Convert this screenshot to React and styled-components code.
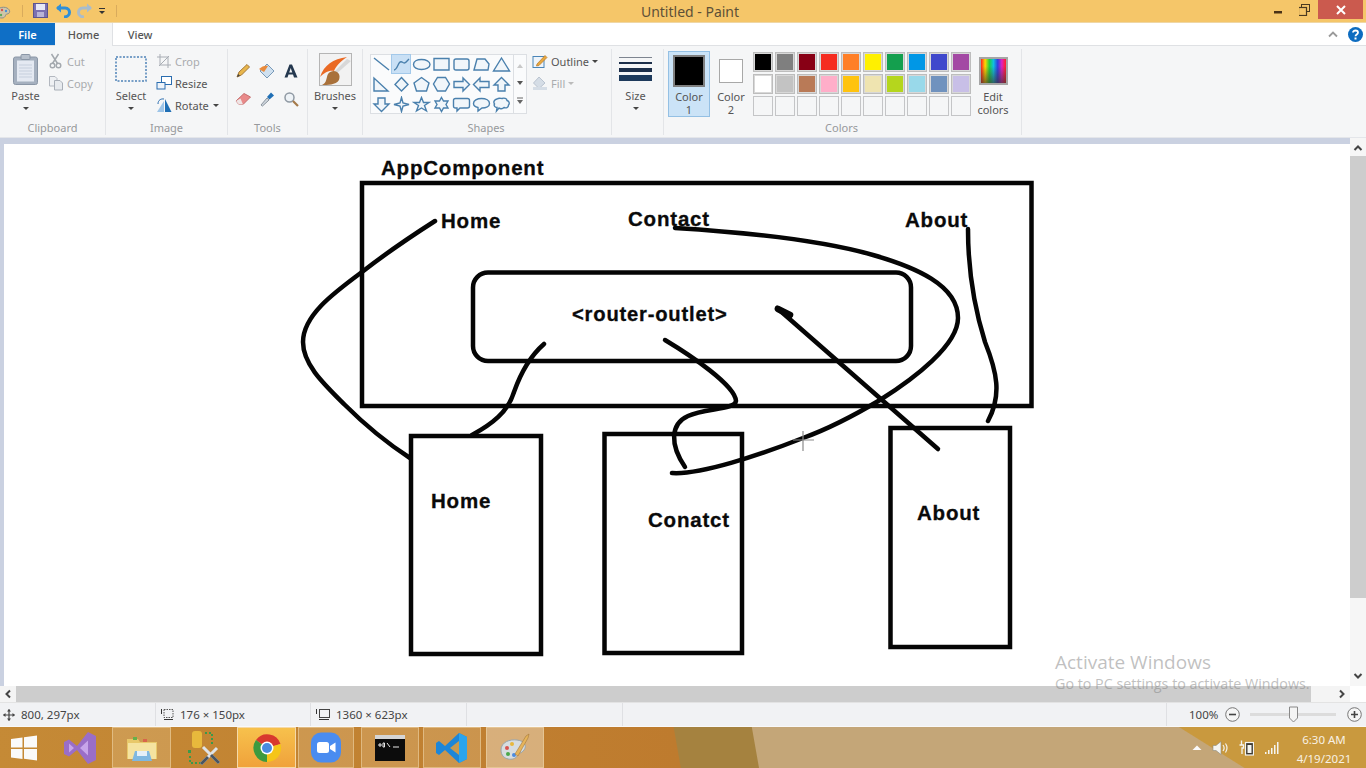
import React from 'react'
import styled, { createGlobalStyle } from 'styled-components'

const Global = createGlobalStyle`
  html, body { margin: 0; padding: 0; background: #fff; }
  body { font-family: "Noto Sans", "Open Sans", "Liberation Sans", sans-serif; }
`

const Window = styled.div`
  width: 1366px;
  height: 768px;
  overflow: hidden;
  display: flex;
  flex-direction: column;
  position: relative;
`

/* title bar */
const TitleBar = styled.div`
  height: 23px;
  flex: none;
  box-sizing: border-box;
  background: #f5c669;
  border-bottom: 1px solid #efd7a6;
  display: flex;
  align-items: center;
  position: relative;
`
const QuickAccess = styled.div`
  display: flex;
  align-items: center;
  height: 22px;
  width: 120px;
  margin-top: -1px;
`
const QuickSep = styled.span`
  width: 1px;
  height: 12px;
  background: #d9ab5c;
  margin: ${p => p.$m};
`
const Gap = styled.span`
  width: ${p => p.$w}px;
  flex: none;
`
const Title = styled.div`
  flex: 1;
  text-align: center;
  font-size: 14px;
  color: #5d5037;
  margin-right: 6px;
  margin-top: 1px;
`
const WinControls = styled.div`
  display: flex;
  align-items: flex-start;
  height: 22px;
  padding-right: 3px;
`
const WinBtn = styled.div`
  width: ${p => p.$w}px;
  height: 19px;
  display: flex;
  align-items: center;
  justify-content: center;
  background: ${p => p.$bg || 'none'};
`

/* tabs */
const TabRow = styled.div`
  height: 23px;
  flex: none;
  box-sizing: border-box;
  background: #fff;
  border-bottom: 1px solid #dfe1e4;
  display: flex;
  align-items: stretch;
`
const Tab = styled.div`
  width: ${p => p.$w}px;
  display: flex;
  align-items: center;
  justify-content: center;
  font-size: 11px;
  color: ${p => (p.$file ? '#fff' : '#555')};
  font-weight: ${p => (p.$file ? 600 : 500)};
  background: ${p => (p.$file ? '#0f6fc6' : p.$on ? '#f5f6f7' : '#fff')};
  border-right: ${p => (p.$on ? '1px solid #dfe1e4' : 'none')};
  box-sizing: border-box;
  margin-bottom: ${p => (p.$on ? '-1px' : 0)};
`
const TabEnd = styled.div`
  margin-left: auto;
  display: flex;
  align-items: center;
  gap: 10px;
  padding-right: 3px;
`

/* ribbon */
const Ribbon = styled.div`
  height: 92px;
  flex: none;
  box-sizing: border-box;
  background: #f5f6f7;
  border-bottom: 1px solid #e4e6ea;
  padding-top: 3px;
  display: flex;
`
const Group = styled.div`
  width: ${p => p.$w}px;
  flex: none;
  box-sizing: border-box;
  height: 86px;
  border-right: 1px solid #e3e5e8;
  display: flex;
  flex-direction: column;
`
const GroupBody = styled.div`
  height: 73px;
  display: flex;
  padding-left: ${p => p.$pl || 0}px;
  gap: ${p => p.$gap || 0}px;
`
const GroupName = styled.div`
  font-size: 11px;
  line-height: 14px;
  text-align: center;
  color: #97999c;
  padding-right: ${p => p.$pr || 0}px;
`
const BigTool = styled.div`
  width: ${p => p.$w}px;
  flex: none;
  display: flex;
  flex-direction: column;
  align-items: center;
  font-size: 11px;
  line-height: 13px;
  color: #555;
`
const BigIcon = styled.div`
  height: 40px;
  display: flex;
  align-items: center;
  justify-content: center;
`
const Caret = styled.div`
  width: 0;
  height: 0;
  margin-top: ${p => p.$mt ?? 5}px;
  margin-left: ${p => p.$ml || 0}px;
  border-left: 3px solid transparent;
  border-right: 3px solid transparent;
  border-top: 3px solid ${p => (p.$off ? '#bbb' : '#444')};
`
const SmallCol = styled.div`
  display: flex;
  flex-direction: column;
  gap: 6px;
  padding-top: 4px;
`
const SmallTool = styled.div`
  height: 16px;
  display: flex;
  align-items: center;
  gap: 3px;
  font-size: 11px;
  color: ${p => (p.$off ? '#a9abae' : '#555')};
`
const ToolGrid = styled.div`
  display: grid;
  grid-template-columns: repeat(3, 24px);
  grid-auto-rows: 28px;
  padding: 8px 0 0 3px;
  justify-items: center;
  align-items: center;
`
const Gallery = styled.div`
  width: 157px;
  height: 60px;
  box-sizing: border-box;
  margin-top: 5px;
  background: #fafbfc;
  border: 1px solid #dcdfe3;
  display: flex;
`
const GalleryGrid = styled.div`
  width: 142px;
  margin-top: -1px;
  display: grid;
  grid-template-columns: repeat(7, 20px);
  grid-auto-rows: 20px;
`
const ShapeCell = styled.div`
  display: flex;
  align-items: center;
  justify-content: center;
  box-sizing: border-box;
  ${p => p.$on && 'background: #c9e0f5; border: 1px solid #a3c9ea;'}
`
const GalleryArrows = styled.div`
  flex: 1;
  border-left: 1px solid #dcdfe3;
  display: flex;
  flex-direction: column;
  align-items: center;
  justify-content: space-around;
  padding: 2px 0;
`
const ColorTool = styled.div`
  width: ${p => p.$w}px;
  height: ${p => (p.$on ? '66px' : 'auto')};
  margin-left: ${p => p.$ml || 0}px;
  flex: none;
  box-sizing: border-box;
  margin-top: 2px;
  display: flex;
  flex-direction: column;
  align-items: center;
  font-size: 11px;
  line-height: 13px;
  color: #555;
  text-align: center;
  background: ${p => (p.$on ? '#cbe3f7' : 'none')};
  border: 1px solid ${p => (p.$on ? '#94c0e4' : 'transparent')};
`
const ColorSlot = styled.div`
  height: 37px;
  display: flex;
  align-items: center;
  justify-content: center;
  margin-bottom: 1px;
`
const CurrentColor = styled.div`
  width: ${p => p.$s}px;
  height: ${p => p.$s}px;
  box-sizing: border-box;
  background: ${p => p.$c};
  border: ${p => (p.$thick ? '2px solid #7f7f7f' : '1px solid #a8a8a8')};
`
const Palette = styled.div`
  display: grid;
  grid-template-columns: repeat(10, 20px);
  grid-auto-rows: 20px;
  gap: 2px;
  padding-top: 3px;
  margin-left: 1px;
`
const Swatch = styled.div`
  box-sizing: border-box;
  background: ${p => p.$c};
  border: 1px solid ${p => (p.$c === 'none' ? '#c4c5c7' : '#bdbdbd')};
  box-shadow: ${p => (p.$c === 'none' ? 'none' : 'inset 0 0 0 1px #d8d8d8')};
`
const Spectrum = styled.div`
  width: 29px;
  height: 28px;
  box-sizing: border-box;
  border: 2px solid #a5a5a5;
  background:
    linear-gradient(to bottom, rgba(40,40,40,0) 30%, rgba(60,50,40,.65) 100%),
    linear-gradient(to right, #ff2020, #ffd800, #20d040, #10c0e0, #3040e0, #e020c0, #ff2020);
`

/* workspace */
const Workspace = styled.div`
  flex: 1;
  min-height: 0;
  display: grid;
  grid-template-columns: 1350px 16px;
  grid-template-rows: 548px 16px;
  position: relative;
`
const CanvasPane = styled.div`
  background: #cad1e1;
  padding: 6px 0 0 4px;
  overflow: hidden;
`
const Canvas = styled.div`
  width: 100%;
  height: 100%;
  background: #fff;
  position: relative;
`
const Drawing = styled.svg`
  position: absolute;
  left: -4px;
  top: 0;
`
const Label = styled.div`
  position: absolute;
  left: ${p => p.$x - 4}px;
  top: ${p => p.$y - 156}px;
  line-height: 24px;
  font-family: "Liberation Sans", Arial, sans-serif;
  font-weight: 700;
  font-size: ${p => p.$size || 20.5}px;
  letter-spacing: 0.8px;
  -webkit-text-stroke: 0.3px #0a0a0a;
  color: #0a0a0a;
  white-space: nowrap;
`
const VScroll = styled.div`
  background: #f6f6f6;
  display: flex;
  flex-direction: column;
  align-items: stretch;
`
const VArrow = styled.div`
  height: ${p => p.$h}px;
  padding-top: ${p => p.$pt || 0}px;
  box-sizing: border-box;
  display: flex;
  align-items: center;
  justify-content: center;
`
const VThumb = styled.div`
  height: 442px;
  background: #cdcdcd;
`
const Filler = styled.div`
  flex: 1;
`
const HScroll = styled.div`
  background: #f4f4f4;
  display: flex;
  align-items: stretch;
`
const HArrow = styled.div`
  width: ${p => p.$w}px;
  display: flex;
  align-items: center;
  justify-content: center;
`
const HThumb = styled.div`
  width: 1295px;
  background: #cdcdcd;
`
const Corner = styled.div`
  background: #fff;
`
const Watermark = styled.div`
  position: absolute;
  left: 1055px;
  top: 512px;
  color: rgba(130, 130, 130, 0.5);
  font-family: "Open Sans", "Noto Sans", sans-serif;
  pointer-events: none;
`
const WatermarkBig = styled.div`
  font-size: 19px;
  line-height: 24px;
`
const WatermarkSmall = styled.div`
  font-size: 14.3px;
  line-height: 20px;
  white-space: nowrap;
`

/* status bar */
const StatusBar = styled.div`
  height: 25px;
  flex: none;
  box-sizing: border-box;
  background: #f1f2f4;
  border-top: 1px solid #e3e3e3;
  border-bottom: 1px solid #f9f9f9;
  display: flex;
  align-items: stretch;
`
const StatusCell = styled.div`
  width: ${p => p.$w}px;
  flex: none;
  box-sizing: border-box;
  padding-left: ${p => p.$pl || 0}px;
  border-right: 1px solid #dfe0e3;
  display: flex;
  align-items: center;
  gap: 6px;
  font-size: 11.5px;
  color: #444;
  white-space: nowrap;
`
const ZoomArea = styled.div`
  flex: 1;
  display: flex;
  align-items: center;
  font-size: 11.5px;
  color: #444;
  padding-left: 22px;
`
const ZoomLabel = styled.span`
  width: 35.5px;
  flex: none;
`
const ZoomTrack = styled.div`
  width: 86px;
  height: 3px;
  margin: 0 11px 0 10px;
  background: #dcdcdc;
  position: relative;
`
const ZoomThumb = styled.svg`
  position: absolute;
  left: 39px;
  top: -7px;
`

/* taskbar */
const Taskbar = styled.div`
  height: 41px;
  flex: none;
  display: flex;
  align-items: stretch;
  background:
    linear-gradient(32deg, transparent 659px, #c9993e 660px),
    linear-gradient(80deg, #c58a36 0, #be7b2e 670px, #a5823f 671px, #a5823f 747px, #c4a678 748px);
`
const TaskItem = styled.div`
  width: ${p => p.$w}px;
  margin-left: ${p => p.$ml || 0}px;
  flex: none;
  box-sizing: border-box;
  display: flex;
  align-items: center;
  justify-content: center;
  border: 1px solid ${p => (p.$active ? '#f5d9a8' : p.$open ? 'rgba(240,215,170,.55)' : 'transparent')};
  background: ${p =>
    p.$active
      ? 'linear-gradient(#f7c14c, #f0a23b)'
      : p.$focus
        ? 'rgba(235,215,185,.55)'
        : p.$open
          ? 'rgba(235,205,155,.28)'
          : 'none'};
`
const Tray = styled.div`
  margin-left: auto;
  display: flex;
  align-items: center;
  gap: 10px;
  color: #f6efe2;
  padding-right: 14px;
`
const Clock = styled.div`
  width: 56px;
  margin-left: 6px;
  margin-top: 2px;
  text-align: center;
  font-size: 11.5px;
  line-height: 19px;
  color: #f8f1e4;
`

/* icons */
const Ico = ({ w = 16, h = 16, children }) => (
  <svg width={w} height={h} viewBox={`0 0 ${w} ${h}`} fill="none" style={{ display: 'block', flex: 'none' }}>
    {children}
  </svg>
)

const shapePaths = [
  'M2 2L17 14',
  'M2 14C6 14 6 4 10 6C13 8 13 7 17 3',
  'M9.5 3.5C14 3.5 18 5.5 18 8.5C18 11.5 14 13.5 9.5 13.5C5 13.5 1.5 11.5 1.5 8.5C1.5 5.5 5 3.5 9.5 3.5Z',
  'M2 2.5H17V14H2Z',
  'M4 3H15Q17 3 17 5V12Q17 14 15 14H4Q2 14 2 12V5Q2 3 4 3Z',
  'M2 14L5 3H13L17 8L16 14Z',
  'M9.5 2L17.5 15H1.5Z',
  'M2 2V15H16Z',
  'M9.5 1.5L16 8.5L9.5 15L3 8.5Z',
  'M9.5 1.5L17 7L14.5 15H4.5L2 7Z',
  'M5.5 1.5H13.5L17.5 8L13.5 15H5.5L1.5 8Z',
  'M2 5.5H11V2L17.5 8.5L11 15V11.5H2Z',
  'M17 5.5H8V2L1.5 8.5L8 15V11.5H17Z',
  'M9.5 1.5L17 9H13V15H6V9H2Z',
  'M9.5 15.5L17 8H13V2H6V8H2Z',
  'M9.5 1.5L11 7L17 8.5L11 10L9.5 15.5L8 10L2 8.5L8 7Z',
  'M9.5 1.5L11.5 6.5H17L12.5 9.5L14.5 15L9.5 12L4.5 15L6.5 9.5L2 6.5H7.5Z',
  'M9.5 1.5L11.5 5H16L14 8.5L16 12H11.5L9.5 15.5L7.5 12H3L5 8.5L3 5H7.5Z',
  'M3.5 2.5H15.5Q17.5 2.5 17.5 4.5V10Q17.5 12 15.5 12H8L5 15V12H3.5Q1.5 12 1.5 10V4.5Q1.5 2.5 3.5 2.5Z',
  'M9.5 2.5C14 2.5 17.5 4.5 17.5 7.5C17.5 10.5 14 12 10 12L6 15V11.5C3.5 11 1.5 9.5 1.5 7.5C1.5 4.5 5 2.5 9.5 2.5Z',
  'M5 3C7 1.5 9 2.5 10 2.5C12 1.5 15 2.5 15 4.5C17 5 18 7.5 16.5 9C16.5 11.5 14 12.5 12 11.5C10.5 13 8 13 7 12L4.5 15L5 11.5C3 11.5 1.5 9.5 2.5 8C1 6 2.5 3.5 5 3Z',
]

const palette = [
  '#000000', '#7f7f7f', '#880015', '#f52c20', '#ff7f27', '#fff000', '#149f4e', '#0097e6', '#3f48cc', '#a349a4',
  '#ffffff', '#c3c3c3', '#b97a57', '#ffaec9', '#ffc30e', '#efe4b0', '#b5d61d', '#99d9ea', '#7092be', '#c8bfe7',
  ...Array(10).fill('none'),
]

const App = () => (
  <Window>
    <Global />

    <TitleBar>
      <QuickAccess>
        <Ico w={11} h={20}>
          <path d="M-4 12C-4 7 3 5 7 7C11 9 10 13 7 13C5 13 6 17 2 17C-2 17-4 15-4 12Z" fill="#cfc6a8" stroke="#8a8f8a" />
          <circle cx="2" cy="9" r="1.2" fill="#d9534f" />
          <circle cx="6" cy="10" r="1.2" fill="#4a90d9" />
          <circle cx="1" cy="14" r="1.2" fill="#5aa85a" />
        </Ico>
        <QuickSep $m="0 10px 0 11px" />
        <Ico w={15} h={15}>
          <rect x="0.5" y="0.5" width="14" height="14" fill="#7c70b0" stroke="#5a5490" />
          <rect x="3" y="1" width="9" height="6" fill="#e8e8f5" />
          <rect x="4" y="9" width="7" height="5" fill="#b9b3d6" />
        </Ico>
        <Gap $w={7} />
        <Ico w={16} h={15}>
          <path d="M2 5H10C13.5 5 14.5 8 14.5 9.5C14.5 12 12 14 9 14" stroke="#2f8fd8" strokeWidth="3" />
          <path d="M6 0.5L1 5L6 9.5Z" fill="#2f8fd8" />
        </Ico>
        <Gap $w={6} />
        <Ico w={16} h={15}>
          <path d="M14 5H6C2.5 5 1.5 8 1.5 9.5C1.5 12 4 14 7 14" stroke="#a9bccb" strokeWidth="3" />
          <path d="M10 0.5L15 5L10 9.5Z" fill="#a9bccb" />
        </Ico>
        <Gap $w={5} />
        <Ico w={8} h={8}>
          <path d="M1 1.5H7" stroke="#333" />
          <path d="M1 4H7L4 7Z" fill="#333" />
        </Ico>
        <QuickSep $m="0 0 0 10px" />
      </QuickAccess>
      <Title>Untitled - Paint</Title>
      <WinControls>
        <WinBtn $w={26}>
          <Ico w={10} h={10}><rect x="0" y="6" width="8" height="2.5" fill="#4a3216" /></Ico>
        </WinBtn>
        <WinBtn $w={26}>
          <Ico w={12} h={12}>
            <rect x="2.5" y="0.5" width="8" height="7" stroke="#4a3a20" />
            <rect x="-0.5" y="3.5" width="8" height="8" fill="#f5c669" stroke="#4a3a20" strokeWidth="1.2" />
          </Ico>
        </WinBtn>
        <WinBtn $w={45} $bg="#cb5a4e">
          <Ico w={10} h={10}>
            <path d="M1 1L9 9M9 1L1 9" stroke="#fff" strokeWidth="2" />
          </Ico>
        </WinBtn>
      </WinControls>
    </TitleBar>

    <TabRow>
      <Tab $w={55} $file>File</Tab>
      <Tab $w={58} $on>Home</Tab>
      <Tab $w={54}>View</Tab>
      <TabEnd>
        <Ico w={10} h={8}><path d="M1 6.5L5 2.5L9 6.5" stroke="#9a9a9a" strokeWidth="1.8" /></Ico>
        <Ico w={15} h={15}>
          <circle cx="7.5" cy="7.5" r="7.5" fill="#0d6cc0" />
          <path d="M5 5.5C5 2.8 10 2.8 10 5.5C10 7.5 7.5 7.3 7.5 9.2" stroke="#fff" strokeWidth="1.8" />
          <rect x="6.5" y="10.5" width="2" height="2" fill="#fff" />
        </Ico>
      </TabEnd>
    </TabRow>

    <Ribbon>
      <Group $w={106}>
        <GroupBody $pl={9} $gap={6}>
          <BigTool $w={33}>
            <BigIcon>
              <Ico w={25} h={31}>
                <rect x="0.5" y="3" width="24" height="27.5" rx="2" fill="#a5b0bf" stroke="#8a96a6" />
                <rect x="4" y="6.5" width="17" height="21" fill="#e4e9f2" />
                <path d="M6 11H19M6 14H19M6 17H19M6 20H19M6 23H19" stroke="#c6cfdd" />
                <rect x="8" y="0.5" width="9" height="5" rx="1" fill="#b6bfcb" stroke="#8a96a6" />
              </Ico>
            </BigIcon>
            <span>Paste</span>
            <Caret />
          </BigTool>
          <SmallCol>
            <SmallTool $off>
              <Ico>
                <circle cx="4.5" cy="12.5" r="2.3" stroke="#a3a8ae" strokeWidth="1.4" />
                <circle cx="10.5" cy="12.5" r="2.3" stroke="#a3a8ae" strokeWidth="1.4" />
                <path d="M3.5 1L9.5 10.5M10.5 1L4.5 10.5" stroke="#a3a8ae" strokeWidth="1.5" />
              </Ico>
              Cut
            </SmallTool>
            <SmallTool $off>
              <Ico>
                <path d="M1.5 1.5H7L9 3.5V11H1.5Z" fill="#eef0f3" stroke="#b3b8c0" />
                <path d="M6.5 5.5H12L14.5 8V15H6.5Z" fill="#e7eaee" stroke="#a9afb8" />
              </Ico>
              Copy
            </SmallTool>
          </SmallCol>
        </GroupBody>
        <GroupName>Clipboard</GroupName>
      </Group>

      <Group $w={122}>
        <GroupBody $pl={7} $gap={7}>
          <BigTool $w={36}>
            <BigIcon>
              <Ico w={32} h={26}>
                <rect x="1" y="1" width="30" height="24" stroke="#4d83b8" strokeWidth="1.5" strokeDasharray="2 1.5" />
              </Ico>
            </BigIcon>
            <span>Select</span>
            <Caret />
          </BigTool>
          <SmallCol>
            <SmallTool $off>
              <Ico>
                <path d="M4 1V12H15M1 4H12V15M3 13L13 3" stroke="#a8adb4" />
              </Ico>
              Crop
            </SmallTool>
            <SmallTool>
              <Ico>
                <rect x="5.5" y="1.5" width="10" height="8" fill="#fff" stroke="#2a6db0" />
                <rect x="1" y="7.5" width="8" height="6.5" fill="#eef4fa" stroke="#2a6db0" />
              </Ico>
              Resize
            </SmallTool>
            <SmallTool>
              <Ico>
                <path d="M1 15L8 4V15Z" fill="#9ec5e8" />
                <path d="M9 2V15H15.5Z" fill="#1f6fb5" />
                <path d="M2 7C2 3 5 1.5 8 2" stroke="#2a6db0" />
              </Ico>
              Rotate
              <Caret $mt={0} $ml={1} />
            </SmallTool>
          </SmallCol>
        </GroupBody>
        <GroupName>Image</GroupName>
      </Group>

      <Group $w={80}>
        <GroupBody>
          <ToolGrid>
            <Ico>
              <path d="M2 14L4 9L12 1.5L14.5 4L6.5 12Z" fill="#e8b64c" stroke="#a5793a" />
              <path d="M2 14L3.2 11L5 12.8Z" fill="#444" />
            </Ico>
            <Ico w={18} h={16}>
              <path d="M9 1L16 8L9 15L2 8Z" fill="#cfe0ef" stroke="#7899b8" />
              <path d="M1 6C4 3 8 2 10 3L6 9Z" fill="#e98a3c" />
            </Ico>
            <Ico>
              <path d="M6.5 1.5H9L14.5 14.5H11L10 11.5H5.5L4.5 14.5H1.5ZM6.2 9.5H9.3L7.7 5Z" fill="#24384f" />
            </Ico>
            <Ico w={17} h={16}>
              <path d="M1 10L9 2.5L15.5 6L8 13.5L4 13.5Z" fill="#e98a8a" stroke="#c66e6e" />
              <path d="M1 10L4 13.5L8 13.5L5.5 7.5Z" fill="#efe5e5" />
            </Ico>
            <Ico>
              <path d="M2 14L8 7L10 9L3.5 15Z" fill="#cfd6dd" stroke="#8a949e" />
              <path d="M8 6L12 1.5L15 4.5L10.5 8.5Z" fill="#1f6fb5" />
            </Ico>
            <Ico>
              <circle cx="6.5" cy="6.5" r="4.5" fill="#eef3f7" stroke="#8f99a3" strokeWidth="1.5" />
              <path d="M10 10L15 15" stroke="#a57a4a" strokeWidth="2.2" />
            </Ico>
          </ToolGrid>
        </GroupBody>
        <GroupName>Tools</GroupName>
      </Group>

      <Group $w={55}>
        <GroupBody>
          <BigTool $w={54}>
            <BigIcon>
              <Ico w={33} h={33}>
                <rect x="0.5" y="0.5" width="32" height="32" fill="#f2f2f2" stroke="#b5b5b5" />
                <path d="M1 24C5 12 14 6 28 4C21 9 17 13 15 18C10 17 5 20 1 24Z" fill="#ea6a24" />
                <path d="M32 8L16 22L14 20L28 6Z" fill="#d8d8d8" />
                <path d="M9 21C14 15 23 19 20 27C17 32 8 32 3 32C8 30 7 25 9 21Z" fill="#a9713a" />
              </Ico>
            </BigIcon>
            <span>Brushes</span>
            <Caret />
          </BigTool>
        </GroupBody>
      </Group>

      <Group $w={249}>
        <GroupBody $pl={7} $gap={5}>
          <Gallery>
            <GalleryGrid>
              {shapePaths.map((d, i) => (
                <ShapeCell key={d} $on={i === 1}>
                  <Ico w={19} h={17}>
                    <path d={d} stroke="#4a80ad" strokeWidth="1.4" fill={i < 2 ? 'none' : '#f1f6fa'} />
                  </Ico>
                </ShapeCell>
              ))}
            </GalleryGrid>
            <GalleryArrows>
              <Ico w={8} h={6}><path d="M4 1L7 5H1Z" fill="#c8c8c8" /></Ico>
              <Ico w={8} h={6}><path d="M1 1H7L4 5Z" fill="#555" /></Ico>
              <Ico w={8} h={8}><path d="M1 1H7" stroke="#666" /><path d="M1 3H7L4 7Z" fill="#666" /></Ico>
            </GalleryArrows>
          </Gallery>
          <SmallCol>
            <SmallTool>
              <Ico>
                <rect x="1" y="3.5" width="11" height="11" fill="#eef4fa" stroke="#4a85b8" />
                <path d="M5 11L13 2.5L15 4.5L7 12.5L4.5 13Z" fill="#e8a83e" stroke="#b5752a" strokeWidth=".7" />
              </Ico>
              Outline
              <Caret $mt={0} />
            </SmallTool>
            <SmallTool $off>
              <Ico>
                <path d="M7 2L13 8L7 13.5L1.5 8Z" fill="#d5dde6" stroke="#bac4d0" />
                <rect x="1" y="12" width="14" height="3" fill="#d5dde6" />
              </Ico>
              Fill
              <Caret $mt={0} $off />
            </SmallTool>
          </SmallCol>
        </GroupBody>
        <GroupName $pr={2}>Shapes</GroupName>
      </Group>

      <Group $w={52}>
        <GroupBody>
          <BigTool $w={47}>
            <BigIcon>
              <Ico w={33} h={30}>
                <rect x="0" y="3" width="33" height="1" fill="#7e8590" />
                <rect x="0" y="8" width="33" height="2" fill="#1d2f4a" />
                <rect x="0" y="14" width="33" height="4" fill="#1d2f4a" />
                <rect x="0" y="21" width="33" height="6" fill="#1d3a5c" />
              </Ico>
            </BigIcon>
            <span>Size</span>
            <Caret />
          </BigTool>
        </GroupBody>
      </Group>

      <Group $w={358}>
        <GroupBody $pl={4} $gap={9}>
          <ColorTool $w={42} $on>
            <ColorSlot>
              <CurrentColor $s={32} $c="#000" $thick />
            </ColorSlot>
            <span>Color<br />1</span>
          </ColorTool>
          <ColorTool $w={24}>
            <ColorSlot>
              <CurrentColor $s={24} $c="#fff" />
            </ColorSlot>
            <span>Color<br />2</span>
          </ColorTool>
          <Palette>
            {palette.map((c, i) => <Swatch key={i} $c={c} />)}
          </Palette>
          <ColorTool $w={30} $ml={-2}>
            <ColorSlot>
              <Spectrum />
            </ColorSlot>
            <span>Edit<br />colors</span>
          </ColorTool>
        </GroupBody>
        <GroupName $pr={2}>Colors</GroupName>
      </Group>
    </Ribbon>

    <Workspace>
      <CanvasPane>
        <Canvas>
          <Drawing width="1350" height="542" viewBox="0 144 1350 542" fill="none" stroke="#050505" strokeWidth="4.5" strokeLinecap="round" strokeLinejoin="round">
            <rect x="362" y="183" width="669.5" height="223" strokeLinejoin="miter" />
            <rect x="473" y="272.5" width="438" height="88.5" rx="15" />
            <rect x="411" y="436" width="130" height="218" strokeLinejoin="miter" />
            <rect x="604.5" y="434" width="137.5" height="219" strokeLinejoin="miter" />
            <rect x="890.5" y="428" width="119.5" height="219" strokeLinejoin="miter" />
            <path d="M435 221C410 237 385 254 362 272C335 292 303 315 303 342C303 365 325 385 345 405C365 425 390 445 410 458" />
            <path d="M544 344C528 358 520 375 514 392C508 412 492 424 472 435" />
            <path d="M675 228C740 232 820 240 873 255C915 267 958 285 958 318C958 345 915 378 880 400C850 418 825 430 803 438C760 455 700 475 672 473" />
            <path d="M665 340C690 355 735 385 736 401C735 410 705 408 688 416C670 424 670 445 685 467" />
            <path d="M777 308C830 355 885 402 938 449" />
            <path d="M778 309L790 315" strokeWidth="6.5" />
            <path d="M968 229C968 270 975 310 985 342C997 372 1002 395 988 421" />
            <path d="M793 440H814M803 431V451" stroke="#8c8c8c" strokeWidth="1.2" strokeLinecap="butt" />
          </Drawing>
          <Label $x={381} $y={168}>AppComponent</Label>
          <Label $x={441} $y={221}>Home</Label>
          <Label $x={628} $y={219}>Contact</Label>
          <Label $x={905} $y={220}>About</Label>
          <Label $x={572} $y={314} $size={20.2}>&lt;router-outlet&gt;</Label>
          <Label $x={431} $y={501}>Home</Label>
          <Label $x={648} $y={520}>Conatct</Label>
          <Label $x={917} $y={513}>About</Label>
        </Canvas>
      </CanvasPane>
      <VScroll>
        <VArrow $h={18} $pt={2}>
          <Ico w={10} h={8}><path d="M1.5 6L5 2.5L8.5 6" stroke="#444" strokeWidth="2" /></Ico>
        </VArrow>
        <VThumb />
        <Filler />
        <VArrow $h={20}>
          <Ico w={10} h={8}><path d="M1.5 2L5 5.5L8.5 2" stroke="#444" strokeWidth="2" /></Ico>
        </VArrow>
      </VScroll>
      <HScroll>
        <HArrow $w={16}>
          <Ico w={8} h={10}><path d="M6 1.5L2.5 5L6 8.5" stroke="#444" strokeWidth="2" /></Ico>
        </HArrow>
        <HThumb />
        <Filler />
        <HArrow $w={16}>
          <Ico w={8} h={10}><path d="M2 1.5L5.5 5L2 8.5" stroke="#444" strokeWidth="2" /></Ico>
        </HArrow>
      </HScroll>
      <Corner />
      <Watermark>
        <WatermarkBig>Activate Windows</WatermarkBig>
        <WatermarkSmall>Go to PC settings to activate Windows.</WatermarkSmall>
      </Watermark>
    </Workspace>

    <StatusBar>
      <StatusCell $w={156} $pl={3}>
        <Ico w={12} h={12}>
          <path d="M6 0.5V11.5M0.5 6H11.5" stroke="#444" strokeWidth="1.2" />
          <path d="M6 0L4 2.5H8ZM6 12L4 9.5H8ZM0 6L2.5 4V8ZM12 6L9.5 4V8Z" fill="#444" />
        </Ico>
        800, 297px
      </StatusCell>
      <StatusCell $w={155} $pl={5}>
        <Ico w={13} h={13}>
          <rect x="3" y="1.5" width="9" height="8" stroke="#555" strokeDasharray="1.5 1" />
          <path d="M0.5 1V6M3 11.5H12" stroke="#333" />
        </Ico>
        176 × 150px
      </StatusCell>
      <StatusCell $w={156} $pl={5}>
        <Ico w={14} h={13}>
          <rect x="3.5" y="1.5" width="10" height="8" stroke="#444" />
          <path d="M0.5 1V6M3 11.5H13" stroke="#333" />
        </Ico>
        1360 × 623px
      </StatusCell>
      <StatusCell $w={156} />
      <StatusCell $w={544} />
      <ZoomArea>
        <ZoomLabel>100%</ZoomLabel>
        <Ico w={15} h={15}>
          <circle cx="7.5" cy="7.5" r="6.8" fill="#f6f6f6" stroke="#777" />
          <path d="M4 7.5H11" stroke="#444" strokeWidth="1.6" />
        </Ico>
        <ZoomTrack>
          <ZoomThumb width="9" height="17" viewBox="0 0 9 17">
            <path d="M0.5 1H8.5V12L4.5 16L0.5 12Z" fill="#f4f4f4" stroke="#888" />
          </ZoomThumb>
        </ZoomTrack>
        <Ico w={15} h={15}>
          <circle cx="7.5" cy="7.5" r="6.8" fill="#f6f6f6" stroke="#777" />
          <path d="M4 7.5H11M7.5 4V11" stroke="#444" strokeWidth="1.6" />
        </Ico>
      </ZoomArea>
    </StatusBar>

    <Taskbar>
      <TaskItem $w={48}>
        <Ico w={26} h={26}>
          <path d="M0 4L11.5 2.5V12.5H0ZM13 2.2L26 0.5V12.5H13ZM0 14H11.5V24L0 22.5ZM13 14H26V25.5L13 23.8Z" fill="#fafafa" />
        </Ico>
      </TaskItem>
      <TaskItem $w={64}>
        <Ico w={34} h={34}>
          <path d="M1 11L6 8.5L14 15L25 1L33 5V29L25 33L14 19L6 25.5L1 23Z" fill="#9a6ec8" />
          <path d="M6 12.5L11 17L6 21.5ZM25 9.5V24.5L17 17Z" fill="#c7a5ea" />
        </Ico>
      </TaskItem>
      <TaskItem $w={59} $open>
        <Ico w={32} h={28}>
          <path d="M1 5H12L14 8H31V25H1Z" fill="#e8c86a" />
          <rect x="2" y="9" width="28" height="16" fill="#f5e3a0" />
          <rect x="7" y="3" width="4" height="3" fill="#66b04a" />
          <rect x="17" y="5" width="4" height="3" fill="#d9654a" />
          <path d="M9 17H23L26 27H6Z" fill="#7fb8e0" />
          <rect x="11" y="17" width="10" height="5" fill="#e5f0f8" />
        </Ico>
      </TaskItem>
      <TaskItem $w={66}>
        <Ico w={34} h={36}>
          <rect x="5" y="1" width="10" height="17" rx="3" fill="#e8b83c" />
          <rect x="1" y="20" width="3" height="3" fill="#3a9a4a" />
          <path d="M18 3H25V16M3 26V33H14" stroke="#3a9a4a" strokeWidth="2" strokeDasharray="2 2" />
          <path d="M14 34L30 18M16 17L32 33" stroke="#dfe3e6" strokeWidth="3" />
          <path d="M14 34L21 27M24 25L32 33" stroke="#4a5560" strokeWidth="3" />
        </Ico>
      </TaskItem>
      <TaskItem $w={59} $active>
        <Ico w={30} h={30}>
          <path d="M15 15L4 7A14 14 0 0 1 28.5 11Z" fill="#d8382e" />
          <path d="M15 15L28.5 11A14 14 0 0 1 15 29Z" fill="#f5c518" />
          <path d="M15 15L15 29A14 14 0 0 1 4 7Z" fill="#3d9a3f" />
          <circle cx="15" cy="15" r="6.5" fill="#fff" />
          <circle cx="15" cy="15" r="5" fill="#4a8be0" />
        </Ico>
      </TaskItem>
      <TaskItem $w={56} $ml={2} $open>
        <Ico w={30} h={31}>
          <rect x="0" y="0.5" width="30" height="30" rx="10" fill="#4a8cf0" />
          <rect x="6" y="10" width="12" height="11" rx="2.5" fill="#fff" />
          <path d="M19 14L24.5 10.5V20.5L19 17Z" fill="#fff" />
        </Ico>
      </TaskItem>
      <TaskItem $w={58} $ml={7} $open>
        <Ico w={30} h={26}>
          <rect x="0" y="0" width="30" height="26" fill="#0c0c0c" />
          <rect x="0" y="0" width="30" height="4" fill="#d5d5d5" />
          <path d="M4 9H6V11H4ZM8 8H9.5V12H8ZM12 8L15 12M18 12H24" stroke="#e8e8e8" />
        </Ico>
      </TaskItem>
      <TaskItem $w={58} $ml={4} $open>
        <Ico w={32} h={32}>
          <path d="M23 1L31 5V27L23 31L9 18L3 23L0 21V11L3 9L9 14Z" fill="#1d86d8" />
          <path d="M23 9L14 16L23 23Z" fill="#c89a50" />
          <path d="M23 1L31 5V27L23 31Z" fill="#2aa4ee" />
        </Ico>
      </TaskItem>
      <TaskItem $w={58} $ml={5} $focus $open>
        <Ico w={32} h={30}>
          <path d="M2 17C2 9 11 6 18 7C26 8 28 13 25 17C22 21 20 19 18 23C16 28 2 28 2 17Z" fill="#d7dde0" stroke="#9aa5aa" />
          <circle cx="8" cy="15" r="2" fill="#d9534f" />
          <circle cx="13" cy="11" r="2" fill="#e8b83c" />
          <circle cx="9" cy="21" r="2" fill="#4aa84a" />
          <circle cx="15" cy="22" r="2" fill="#4a8be0" />
          <path d="M16 21L27 3L30 1L29 5L19 23Z" fill="#e6b45a" stroke="#a5793a" strokeWidth=".6" />
        </Ico>
      </TaskItem>
      <Tray>
        <Ico w={10} h={6}><path d="M5 0.5L9.5 5H0.5Z" fill="#fafafa" /></Ico>
        <Ico w={17} h={16}>
          <path d="M1 5.5H4L9 1.5V14.5L4 10.5H1Z" fill="#f4f4f0" stroke="#8c8c80" strokeWidth=".6" />
          <path d="M11 5C12.5 7 12.5 9 11 11M13.5 3.5C15.5 6.5 15.5 9.5 13.5 12.5" stroke="#f4f4f0" strokeWidth="1.2" />
        </Ico>
        <Ico w={15} h={16}>
          <path d="M2.5 0.5V5M0.5 5H4.5V8H3V14" stroke="#f4f4f0" strokeWidth="1.3" />
          <rect x="6.5" y="2.5" width="8" height="12.5" fill="#3f3a30" stroke="#f4f4f0" strokeWidth="1.2" />
          <rect x="8.5" y="5" width="4" height="8" fill="#f4f4f0" />
        </Ico>
        <Ico w={16} h={13}>
          <path d="M1 11H2.5V13H1ZM4 9H5.5V13H4ZM7 7H8.5V13H7ZM10 4H11.5V13H10ZM13 1H14.5V13H13Z" fill="#f4f4f0" />
        </Ico>
        <Clock>6:30 AM<br />4/19/2021</Clock>
      </Tray>
    </Taskbar>
  </Window>
)

export default App
